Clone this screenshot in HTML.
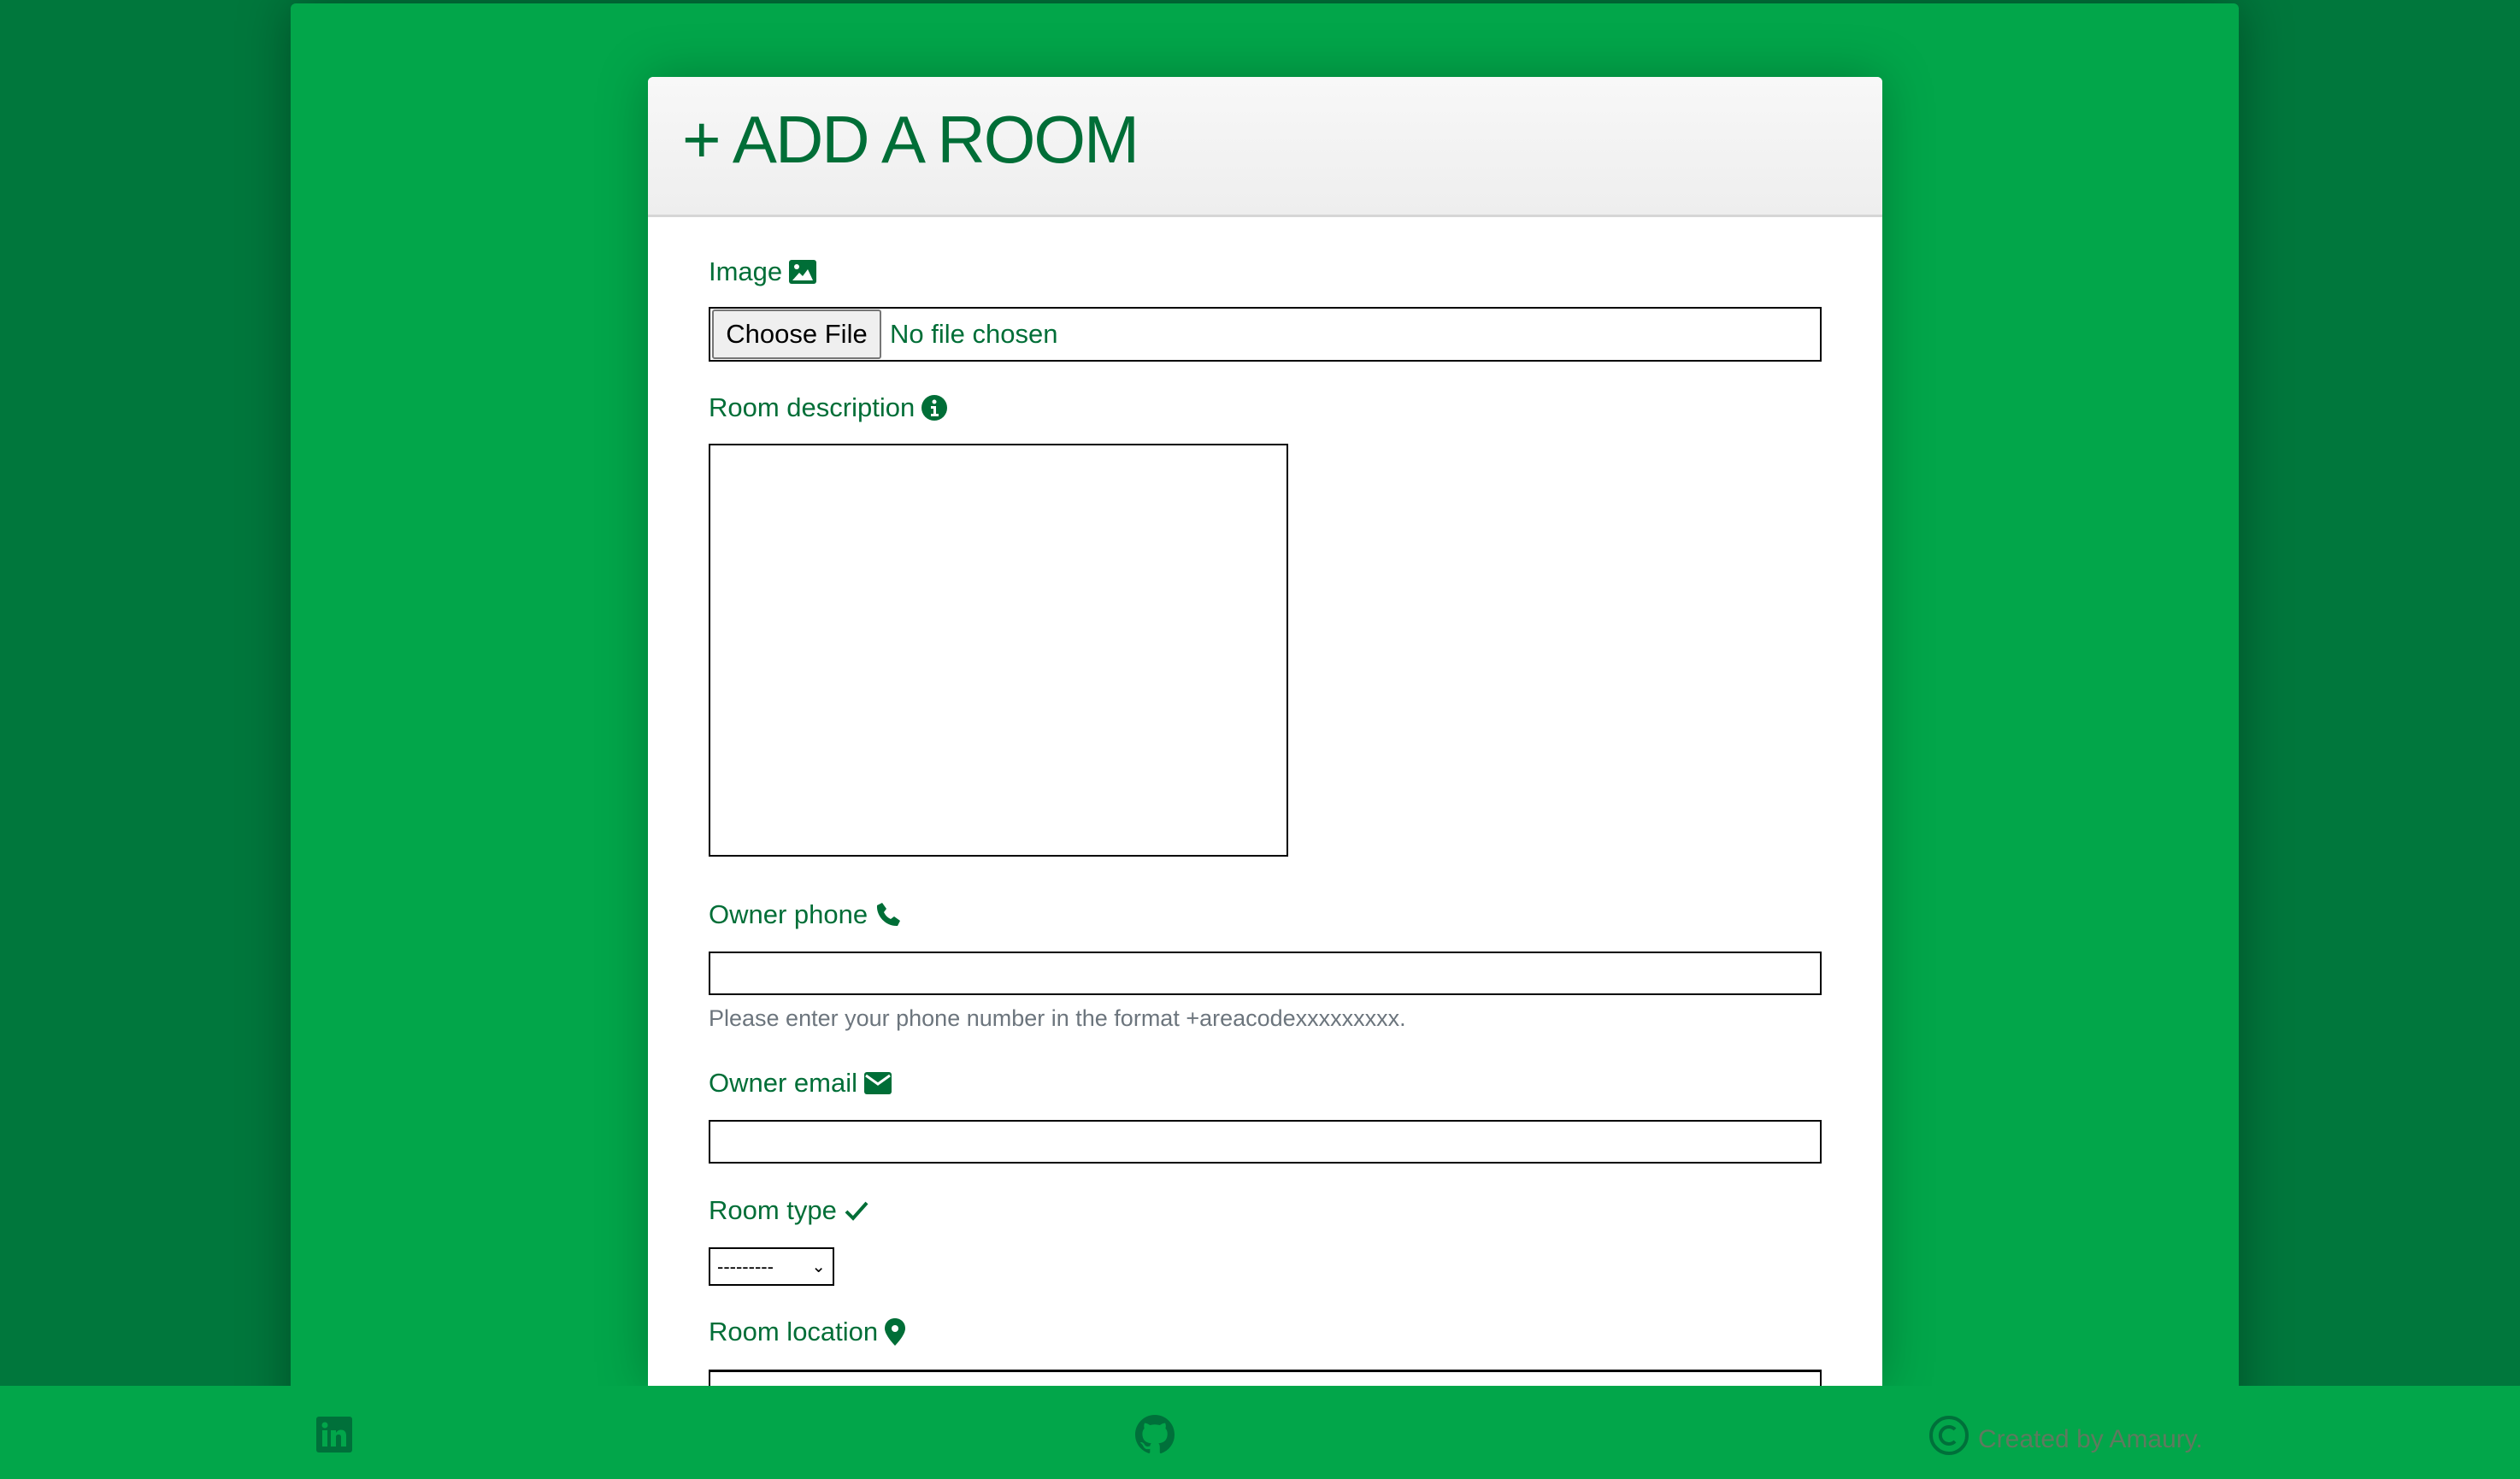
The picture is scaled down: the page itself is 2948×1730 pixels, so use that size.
<!DOCTYPE html>
<html><head><meta charset="utf-8"><style>
*{box-sizing:border-box;margin:0;padding:0}
html,body{width:2948px;height:1730px;overflow:hidden}
body{background:#00773c;font-family:"Liberation Sans",sans-serif;position:relative}
.cont{position:absolute;left:340px;top:4px;width:2279px;height:1726px;background:#02a64a;border-radius:6px;box-shadow:0 0 60px rgba(0,0,0,.35)}
.card{position:absolute;left:758px;top:90px;width:1444px;height:1531px;background:#fff;border-radius:6px 6px 0 0;box-shadow:0 0 60px rgba(0,0,0,.25);overflow:hidden}
.hdr{height:164px;background:linear-gradient(#f8f8f8,#eeeeee);border-bottom:3px solid #d6d6d6;color:#006e37;font-size:78px;padding:28px 0 0 40px;letter-spacing:-2px}
.lbl{position:absolute;left:71px;color:#006e37;font-size:31px;display:flex;align-items:center;gap:8px}
.inp{position:absolute;left:71px;width:1302px;border:2px solid #000;background:#fff}
.help{position:absolute;left:71px;color:#6c757d;font-size:27px}
footer{position:absolute;left:0;top:1621px;width:2948px;height:109px;background:#02a64a}
svg{display:block}
</style></head><body>
<div class="cont"></div>
<div class="card">
<div class="hdr">+ ADD A ROOM</div>
<div class="lbl" style="top:210px">Image <svg width="32" height="28" viewBox="0 0 32 28"><rect width="32" height="28" rx="3" fill="#006e37"/><circle cx="9" cy="8" r="3" fill="#fff"/><path d="M4 24l8-9 4 4 6-8 6 13z" fill="#fff"/></svg></div>
<div class="inp" style="top:269px;height:64px;display:flex;align-items:center;padding-left:2px">
<div style="height:58px;width:198px;background:#efefef;border:2px solid #767676;border-radius:3px;font-size:31px;display:flex;align-items:center;justify-content:center;color:#000">Choose File</div>
<span style="color:#006e37;font-size:31px;margin-left:10px">No file chosen</span></div>
<div class="lbl" style="top:369px">Room description <svg width="30" height="30" viewBox="0 0 30 30"><circle cx="15" cy="15" r="15" fill="#006e37"/><circle cx="15" cy="8" r="2.5" fill="#fff"/><path d="M11 13h6v9h3v3h-9v-3h3v-6h-3z" fill="#fff"/></svg></div>
<div class="inp" style="top:429px;width:678px;height:483px"></div>
<div class="lbl" style="top:962px">Owner phone <svg width="32" height="32" viewBox="0 0 32 32"><path d="M9 2l5 7-3 4c2 4 4 6 8 8l4-3 7 5-3 6C14 30 2 18 3 5z" fill="#006e37"/></svg></div>
<div class="inp" style="top:1023px;height:51px"></div>
<div class="help" style="top:1086px">Please enter your phone number in the format +areacodexxxxxxxxx.</div>
<div class="lbl" style="top:1159px">Owner email <svg width="32" height="26" viewBox="0 0 32 26"><rect width="32" height="26" rx="3" fill="#006e37"/><path d="M2 4l14 10 14-10" stroke="#fff" stroke-width="3" fill="none"/></svg></div>
<div class="inp" style="top:1220px;height:51px"></div>
<div class="lbl" style="top:1308px">Room type <svg width="30" height="26" viewBox="0 0 30 26"><path d="M3 14l8 8L27 4" stroke="#006e37" stroke-width="4" fill="none"/></svg></div>
<div class="inp" style="top:1369px;width:147px;height:45px;border-width:2px;font-size:22px;padding:6px 8px;display:flex;justify-content:space-between;align-items:center"><span>---------</span><span style="font-size:20px">⌄</span></div>
<div class="lbl" style="top:1450px">Room location <svg width="24" height="32" viewBox="0 0 24 32"><path d="M12 0C5 0 0 5 0 12c0 8 12 20 12 20s12-12 12-20C24 5 19 0 12 0z" fill="#006e37"/><circle cx="12" cy="12" r="4" fill="#fff"/></svg></div>
<div class="inp" style="top:1512px;height:60px;border-top-width:3px"></div>
</div>
<footer>
<svg style="position:absolute;left:370px;top:36px" width="42" height="42" viewBox="0 0 42 42"><rect width="42" height="42" rx="3" fill="#00703a"/><rect x="7" y="16" width="6" height="19" fill="#02a64a"/><circle cx="10" cy="10" r="3.5" fill="#02a64a"/><path d="M17 16h6v3c2-3 4-3.5 6-3.5 4 0 6 2.5 6 7V35h-6V24c0-2-1-3-3-3s-3 1-3 3v11h-6z" fill="#02a64a"/></svg>
<svg style="position:absolute;left:1328px;top:34px" width="46" height="46" viewBox="0 0 16 16"><path fill="#00703a" d="M8 0C3.58 0 0 3.58 0 8c0 3.540 2.29 6.530 5.470 7.590.4.07.55-.17.55-.38v-1.330c-2.230.48-2.700-1.070-2.700-1.070-.36-.92-.89-1.170-.89-1.170-.73-.5.06-.49.06-.49.8.06 1.230.83 1.230.83.72 1.230 1.870.87 2.330.67.07-.52.28-.87.51-1.070-1.780-.2-3.640-.89-3.640-3.950 0-.87.31-1.590.82-2.150-.08-.2-.36-1.020.08-2.120 0 0 .67-.21 2.200.82a7.700 7.700 0 014 0c1.530-1.040 2.200-.82 2.200-.82.44 1.100.16 1.920.08 2.120.51.56.82 1.270.82 2.150 0 3.070-1.870 3.750-3.650 3.950.29.25.54.73.54 1.480v2.200c0 .21.15.46.55.38A8.010 8.010 0 0016 8c0-4.420-3.580-8-8-8z"/></svg>
<svg style="position:absolute;left:2256px;top:34px" width="48" height="48" viewBox="0 0 48 48"><circle cx="24" cy="24" r="21" stroke="#00703a" stroke-width="4" fill="none"/><path d="M31 17a10 10 0 1 0 0 14" stroke="#00703a" stroke-width="4" fill="none"/></svg>
<div style="position:absolute;left:2314px;top:46px;font-size:30px;color:#5f7a5f">Created by Amaury.</div>
</footer>
</body></html>
